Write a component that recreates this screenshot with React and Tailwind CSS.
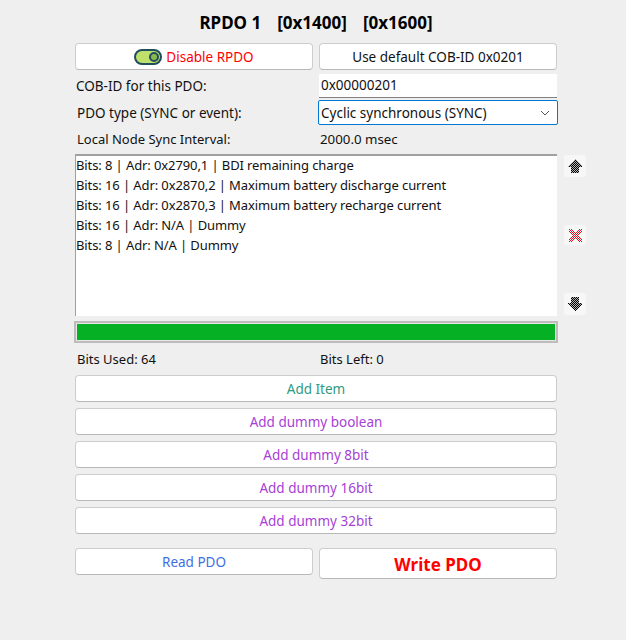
const font = { fontFamily: '"Noto Sans", sans-serif' };

const btn = "flex items-center justify-center bg-white border border-[#cdcdcd] border-b-[#b8b8b8] rounded-[4px] pt-[2px] text-[13.5px] leading-none";

const items = [
  "Bits: 8 | Adr: 0x2790,1 | BDI remaining charge",
  "Bits: 16 | Adr: 0x2870,2 | Maximum battery discharge current",
  "Bits: 16 | Adr: 0x2870,3 | Maximum battery recharge current",
  "Bits: 16 | Adr: N/A | Dummy",
  "Bits: 8 | Adr: N/A | Dummy",
];

const dummies = ["Add dummy boolean", "Add dummy 8bit", "Add dummy 16bit", "Add dummy 32bit"];

// checkered pixels of the red cross
const crossPixels = [];
for (let y = 0; y < 13; y++) {
  for (let x = 0; x < 13; x++) {
    const onBand = Math.abs(x - y) <= 2 || Math.abs(x + y - 12) <= 2;
    if (onBand && (x + y) % 2 === 0) crossPixels.push([x, y]);
  }
}

function Toggle() {
  return (
    <svg width="28" height="16" viewBox="0 0 28 16" className="-mt-[2px]">
      <rect x="1" y="1" width="26" height="14" rx="7" fill="#bfe06a" stroke="#1f4f5f" strokeWidth="2" />
      <circle cx="20" cy="8" r="4" fill="#8fb84a" stroke="#1f4f5f" strokeWidth="2" />
    </svg>
  );
}

function ArrowBtn({ h, children }) {
  return (
    <div className={`w-[22px] ${h} bg-[#f7f7f7] rounded-[3px] flex items-center justify-center`}>
      {children}
    </div>
  );
}

export default function App() {
  return (
    <div style={font} className="w-[626px] h-[640px] bg-[#efefef] text-[#111] text-[13.5px] pl-[75px] pt-[13px] overflow-hidden">
      <div className="w-[482px] h-[20px] flex justify-center items-center gap-[16px] font-bold text-[17px] text-black">
        <span>RPDO 1</span>
        <span>[0x1400]</span>
        <span>[0x1600]</span>
      </div>

      <div className="flex gap-[6px] w-[482px] mt-[10px]">
        <div className={`${btn} w-[238px] h-[27px] gap-[4px] text-[#ff0000]`}>
          <Toggle />
          Disable RPDO
        </div>
        <div className={`${btn} w-[238px] h-[27px]`}>Use default COB-ID 0x0201</div>
      </div>

      <div className="flex w-[482px] mt-[4px] h-[24px] items-center">
        <span className="w-[244px] pl-[1px]">COB-ID for this PDO:</span>
        <div className="w-[238px] h-[24px] bg-white border-b border-[#808080] pl-[2px] flex items-center">0x00000201</div>
      </div>

      <div className="flex w-[482px] mt-[2px] h-[25px] items-center">
        <span className="w-[243px] shrink-0 pl-[2px] pt-[1px]">PDO type (SYNC or event):</span>
        <div className="w-[240px] shrink-0 h-[25px] bg-white border border-[#0078d4] rounded-[2px] pl-[2px] pr-[7px] pt-[1px] flex items-center justify-between">
          Cyclic synchronous (SYNC)
          <svg width="10" height="6" viewBox="0 0 10 6" fill="none" stroke="#555" strokeWidth="1">
            <path d="M1 1l4 4 4-4" />
          </svg>
        </div>
      </div>

      <div className="flex w-[482px] mt-[3px] h-[24px] items-center text-[13px]">
        <span className="w-[245px] pl-[2px]">Local Node Sync Interval:</span>
        <span className="text-[13.3px]">2000.0 msec</span>
      </div>

      <div className="flex mt-[2px]">
        <div className="w-[482px] h-[162px] bg-white border-t-2 border-l border-[#a0a0a0] text-[13px] tracking-[-0.1px] leading-[20px]">
          <div className="-mt-[1px]">
            {items.map((t) => (
              <div key={t}>{t}</div>
            ))}
          </div>
        </div>
        <div className="ml-[7px] flex flex-col justify-between h-[162px] py-[1px]">
          <ArrowBtn h="h-[22px]">
            <svg width="14" height="14" viewBox="0 0 14 14" shapeRendering="crispEdges">
              <defs>
                <pattern id="dith" width="2" height="2" patternUnits="userSpaceOnUse">
                  <rect width="2" height="2" fill="#b0b0b0" />
                  <rect width="1" height="1" fill="#000" />
                  <rect x="1" y="1" width="1" height="1" fill="#000" />
                </pattern>
              </defs>
              <path d="M7 0l7 7v1h-3v6H3V8H0V7z" fill="url(#dith)" />
            </svg>
          </ArrowBtn>
          <ArrowBtn h="h-[20px]">
            <svg width="13" height="13" viewBox="0 0 13 13" shapeRendering="crispEdges">
              {crossPixels.map(([x, y]) => (
                <rect key={`${x}-${y}`} x={x} y={y} width="1" height="1" fill="#e01020" />
              ))}
            </svg>
          </ArrowBtn>
          <ArrowBtn h="h-[22px]">
            <svg width="14" height="14" viewBox="0 0 14 14" shapeRendering="crispEdges">
              <path d="M7 14l7-7V6h-3V0H3v6H0v1z" fill="url(#dith)" />
            </svg>
          </ArrowBtn>
        </div>
      </div>

      <div className="w-[484px] h-[22px] -ml-[1px] mt-[5px] border-2 border-[#bcbcbc] p-[1px] bg-[#e6e6e6]">
        <div className="w-full h-full bg-[#06b025]" />
      </div>

      <div className="flex w-[482px] mt-[7px] h-[20px] items-center text-[13px]">
        <span className="w-[245px] pl-[2px]">Bits Used: 64</span>
        <span>Bits Left: 0</span>
      </div>

      <div className="w-[482px] mt-[5px] flex flex-col gap-[6px]">
        <div className={`${btn} h-[27px] text-[#2e9a80] text-[13.2px]`}>Add Item</div>
        {dummies.map((t) => (
          <div key={t} className={`${btn} h-[27px] text-[#a63fd6] text-[13.2px]`}>{t}</div>
        ))}
      </div>

      <div className="flex gap-[6px] w-[482px] mt-[14px] items-start">
        <div className={`${btn} w-[238px] h-[27px] text-[#3f6fe0]`}>Read PDO</div>
        <div className={`${btn} w-[238px] h-[31px] text-[#ff0000] font-bold text-[17px]`}>Write PDO</div>
      </div>
    </div>
  );
}
